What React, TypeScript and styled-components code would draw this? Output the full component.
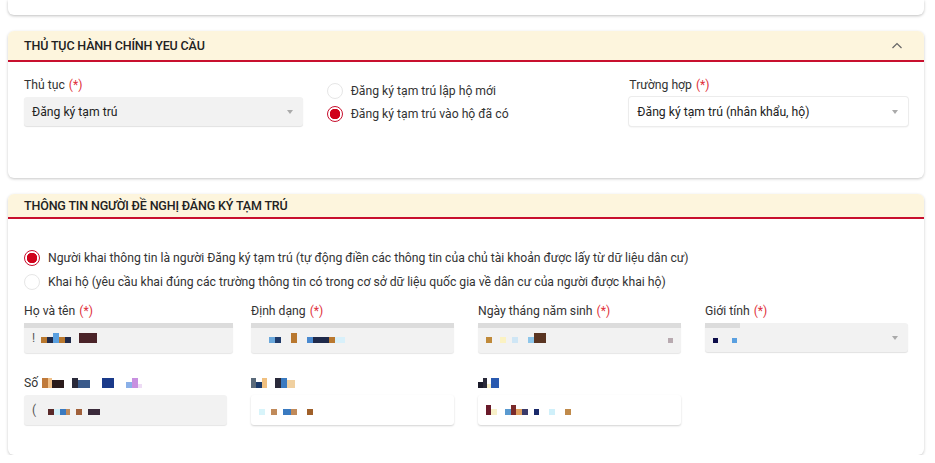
import React from 'react';
import styled, { createGlobalStyle } from 'styled-components';

const GlobalStyle = createGlobalStyle`
    html, body {
        margin: 0;
        padding: 0;
        background: #fff;
    }
    body {
        font-family: Roboto, "Noto Sans", "Liberation Sans", sans-serif;
        font-size: 12.2px;
        color: #333;
    }
`;

const StyledPage = styled.div`
    display: flex;
    flex-direction: column;
    gap: 16px;
    padding: 0 11px 0 8px;
`;

const StyledTopCard = styled.div`
    height: 15px;
    background: #fff;
    border-radius: 0 0 6px 6px;
    box-shadow: 0 1px 3px rgba(0, 0, 0, 0.25);
`;

const StyledCard = styled.section`
    background: #fff;
    border-radius: 6px;
    box-shadow: 0 1px 3px rgba(0, 0, 0, 0.22);
    overflow: hidden;
`;

const StyledCardHeader = styled.header<{ $height: number }>`
    display: flex;
    align-items: center;
    justify-content: space-between;
    height: ${p => p.$height}px;
    padding: 0 16px;
    background: #fdf5dd;
    border-bottom: 2px solid #c8102e;
`;

const StyledCardTitle = styled.h3`
    margin: 0;
    font-weight: 500;
    font-size: 12.5px;
    letter-spacing: -0.15px;
    color: #222;
    text-transform: uppercase;
`;

const StyledChevron = styled.svg`
    width: 14px;
    height: 14px;
    margin-right: 4px;
`;

const StyledCardBody = styled.div<{ $pt: number; $pb: number }>`
    padding: ${p => p.$pt}px 16px ${p => p.$pb}px;
`;

const StyledThreeCols = styled.div`
    display: grid;
    grid-template-columns: repeat(3, 1fr);
    gap: 24px;
`;

const StyledFourCols = styled.div`
    display: grid;
    grid-template-columns: repeat(4, 1fr);
    column-gap: 24px;
    row-gap: 21px;
    margin-top: 12px;
`;

const StyledField = styled.div`
    display: flex;
    flex-direction: column;
    gap: 3px;
`;

const StyledLabel = styled.label`
    display: flex;
    align-items: center;
    height: 18px;
    color: #333;
`;

const StyledRequired = styled.span`
    color: #e0303a;
    margin-left: 4px;
`;

const StyledSelect = styled.div<{ $muted?: boolean }>`
    position: relative;
    display: flex;
    align-items: center;
    justify-content: space-between;
    height: 29px;
    padding: 0 8px;
    border-radius: 3px;
    background: ${p => (p.$muted ? '#f2f2f2' : '#fff')};
    box-shadow: ${p => (p.$muted ? '0 1px 1px rgba(0,0,0,0.12)' : '0 0 0 1px #ececec, 0 1px 2px rgba(0,0,0,0.12)')};
    color: #222;
`;

const StyledCaret = styled.span`
    width: 0;
    height: 0;
    border-left: 3px solid transparent;
    border-right: 3px solid transparent;
    border-top: 4px solid #aaa;
    margin-right: 2px;
`;

const StyledInput = styled.div<{ $muted?: boolean; $width?: string }>`
    position: relative;
    display: flex;
    align-items: center;
    height: 30px;
    width: ${p => p.$width || '100%'};
    padding: 0 8px;
    box-sizing: border-box;
    border-radius: 3px;
    background: ${p => (p.$muted ? '#f2f2f2' : '#fff')};
    box-shadow: ${p => (p.$muted ? '0 1px 1px rgba(0,0,0,0.1)' : '0 1px 2px rgba(0,0,0,0.18)')};
`;

const StyledTopBar = styled.span<{ $width: string }>`
    position: absolute;
    top: 0;
    left: 0;
    width: ${p => p.$width};
    height: 5px;
    background: #dcdcdc;
`;

const StyledRadioGroup = styled.div<{ $pt: number; $gap: number }>`
    display: flex;
    flex-direction: column;
    gap: ${p => p.$gap}px;
    padding-top: ${p => p.$pt}px;
`;

const StyledRadioRow = styled.div`
    display: flex;
    align-items: center;
    gap: 8px;
    color: #333;
`;

const StyledRadio = styled.span<{ $checked?: boolean }>`
    flex: none;
    width: 16px;
    height: 16px;
    border-radius: 50%;
    box-sizing: border-box;
    border: 1px solid ${p => (p.$checked ? '#c8102e' : '#e6e6e6')};
    background: ${p => (p.$checked ? 'radial-gradient(circle, #d0021b 0 5px, #fff 5.5px)' : '#fff')};
`;

const StyledMosaic = styled.span`
    display: inline-flex;
    align-items: flex-end;
    height: 10px;
`;

const StyledPixel = styled.span<{ $c: string; $w: number; $h: number }>`
    display: inline-block;
    width: ${p => p.$w}px;
    height: ${p => p.$h}px;
    background: ${p => p.$c};
`;

const StyledInlineLabel = styled.div`
    display: flex;
    align-items: center;
    gap: 4px;
    height: 18px;
    color: #333;
`;

const StyledCursor = styled.span`
    font-size: 12px;
    color: #555;
    margin-right: 6px;
`;

const StyledSpacer = styled.span`
    flex: 1;
`;

type Pix = [string, number, number?];

function Mosaic({ pixels }: { pixels: Pix[] }) {
    return (
        <StyledMosaic>
            {pixels.map(([c, w, h], i) => (
                <StyledPixel key={i} $c={c} $w={w} $h={h || 6} />
            ))}
        </StyledMosaic>
    );
}

function Required({ label }: { label: string }) {
    return (
        <StyledLabel>
            {label}
            <StyledRequired>(*)</StyledRequired>
        </StyledLabel>
    );
}

function App() {
    return (
        <>
            <GlobalStyle />
            <StyledPage>
                <StyledTopCard />

                <StyledCard>
                    <StyledCardHeader $height={29}>
                        <StyledCardTitle>Thủ tục hành chính yeu cầu</StyledCardTitle>
                        <StyledChevron viewBox="0 0 14 14" fill="none" stroke="#666" strokeWidth="1.2">
                            <path d="M2.5 9 L7 4.5 L11.5 9" />
                        </StyledChevron>
                    </StyledCardHeader>
                    <StyledCardBody $pt={14} $pb={52}>
                        <StyledThreeCols>
                            <StyledField>
                                <Required label="Thủ tục" />
                                <StyledSelect $muted>
                                    Đăng ký tạm trú
                                    <StyledCaret />
                                </StyledSelect>
                            </StyledField>
                            <StyledRadioGroup $pt={7} $gap={7}>
                                <StyledRadioRow>
                                    <StyledRadio />
                                    Đăng ký tạm trú lập hộ mới
                                </StyledRadioRow>
                                <StyledRadioRow>
                                    <StyledRadio $checked />
                                    Đăng ký tạm trú vào hộ đã có
                                </StyledRadioRow>
                            </StyledRadioGroup>
                            <StyledField>
                                <Required label="Trường hợp" />
                                <StyledSelect>
                                    Đăng ký tạm trú (nhân khẩu, hộ)
                                    <StyledCaret />
                                </StyledSelect>
                            </StyledField>
                        </StyledThreeCols>
                    </StyledCardBody>
                </StyledCard>

                <StyledCard>
                    <StyledCardHeader $height={23}>
                        <StyledCardTitle>Thông tin người đề nghị đăng ký tạm trú</StyledCardTitle>
                    </StyledCardHeader>
                    <StyledCardBody $pt={31} $pb={30}>
                        <StyledRadioGroup $pt={0} $gap={8}>
                            <StyledRadioRow>
                                <StyledRadio $checked />
                                Người khai thông tin là người Đăng ký tạm trú (tự động điền các thông tin của chủ tài khoản được lấy từ dữ liệu dân cư)
                            </StyledRadioRow>
                            <StyledRadioRow>
                                <StyledRadio />
                                Khai hộ (yêu cầu khai đúng các trường thông tin có trong cơ sở dữ liệu quốc gia về dân cư của người được khai hộ)
                            </StyledRadioRow>
                        </StyledRadioGroup>

                        <StyledFourCols>
                            <StyledField>
                                <Required label="Họ và tên" />
                                <StyledInput $muted $width="103%">
                                    <StyledTopBar $width="100%" />
                                    <StyledCursor>!</StyledCursor>
                                    <Mosaic pixels={[['#b9782f', 6], ['#1f2a4a', 6], ['#5aa0e0', 6, 10], ['#b9782f', 6], ['#1f2a4a', 6], ['transparent', 8], ['#4a2328', 18, 10]]} />
                                </StyledInput>
                            </StyledField>
                            <StyledField>
                                <Required label="Định dạng" />
                                <StyledInput $muted>
                                    <StyledTopBar $width="100%" />
                                    <Mosaic pixels={[['transparent', 10], ['#6aa8dc', 6], ['#1f3a6a', 6], ['transparent', 10], ['#b9782f', 6, 10], ['transparent', 10], ['#4a8ad0', 6], ['#1f2a4a', 16], ['#b9782f', 6], ['#d8f0fa', 10]]} />
                                </StyledInput>
                            </StyledField>
                            <StyledField>
                                <Required label="Ngày tháng năm sinh" />
                                <StyledInput $muted>
                                    <StyledTopBar $width="100%" />
                                    <Mosaic pixels={[['#c08a3a', 6], ['transparent', 8], ['#fbf2c2', 6], ['transparent', 6], ['#cfe6f5', 6], ['transparent', 10], ['#8ec6ea', 6], ['#5a3522', 12, 10]]} />
                                    <StyledSpacer />
                                    <Mosaic pixels={[['#b8aab0', 5, 5]]} />
                                </StyledInput>
                            </StyledField>
                            <StyledField>
                                <Required label="Giới tính" />
                                <StyledSelect $muted>
                                    <StyledTopBar $width="17%" />
                                    <Mosaic pixels={[['#0d0d4a', 5, 5], ['transparent', 14], ['#5aa0e0', 5, 5]]} />
                                    <StyledCaret />
                                </StyledSelect>
                            </StyledField>

                            <StyledField>
                                <StyledInlineLabel>
                                    Số
                                    <Mosaic pixels={[['#c07a3a', 6, 10], ['#f0c088', 4, 10], ['#2a1a1a', 12, 8], ['transparent', 8], ['#2a2a3a', 6, 10], ['#3a5a8a', 12, 8], ['transparent', 12], ['#1a3a8a', 12, 10], ['transparent', 12], ['#8ab0e8', 6, 6], ['#c890e0', 6, 10], ['#eedcf5', 4, 4]]} />
                                </StyledInlineLabel>
                                <StyledInput $muted>
                                    <StyledCursor>(</StyledCursor>
                                    <Mosaic pixels={[['transparent', 6], ['#5a2a2a', 6], ['#d0f0fa', 6], ['#3a7ac0', 6], ['#c08a5a', 4], ['transparent', 6], ['#a0603a', 6], ['transparent', 6], ['#3a2a3a', 12]]} />
                                </StyledInput>
                            </StyledField>
                            <StyledField>
                                <StyledInlineLabel>
                                    <Mosaic pixels={[['#5a6a7a', 5, 10], ['#1a3a6a', 6, 6], ['#f0c080', 5, 10], ['transparent', 8], ['#2a2a3a', 6, 10], ['#3a7ac0', 6, 10], ['#f0d0a0', 8, 8]]} />
                                </StyledInlineLabel>
                                <StyledInput>
                                    <Mosaic pixels={[['#d8f4fa', 6], ['transparent', 6], ['#c08a5a', 6], ['transparent', 6], ['#3a7ac0', 8], ['#c08a5a', 6], ['transparent', 10], ['#a0602a', 6]]} />
                                </StyledInput>
                            </StyledField>
                            <StyledField>
                                <StyledInlineLabel>
                                    <Mosaic pixels={[['#1a1a2a', 5, 6], ['#2a2a3a', 4, 10], ['#f8f0c8', 4, 4], ['#2a5ab0', 8, 10]]} />
                                </StyledInlineLabel>
                                <StyledInput>
                                    <Mosaic pixels={[['#6a1a2a', 5, 10], ['#f8f0c8', 6], ['transparent', 8], ['#5a9ad0', 6], ['#7a2a2a', 5, 10], ['#e0a060', 6], ['#3a3a6a', 6], ['transparent', 6], ['#1a2a6a', 5], ['transparent', 10], ['#d0f0fa', 6], ['transparent', 10], ['#c08a4a', 6]]} />
                                </StyledInput>
                            </StyledField>
                        </StyledFourCols>
                    </StyledCardBody>
                </StyledCard>
            </StyledPage>
        </>
    );
}

export default App;
